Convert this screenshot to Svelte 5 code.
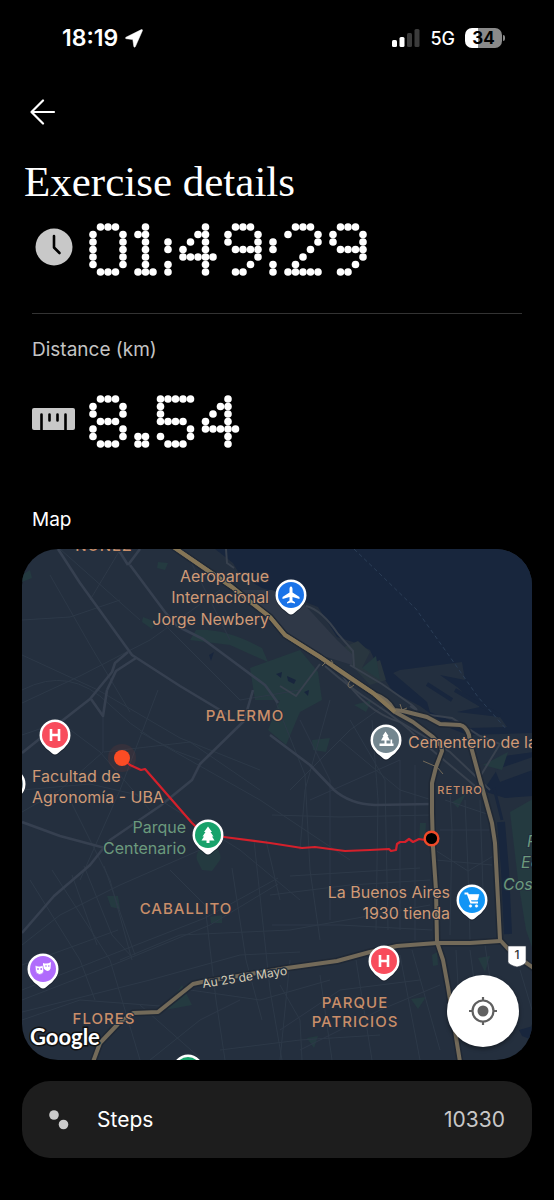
<script>
  // Each glyph is a list of seven rows; "#" marks a lit dot.
  const glyphs = {
    '0': [' ### ', '#   #', '#   #', '#   #', '#   #', '#   #', ' ### '],
    '1': [' # ', '## ', ' # ', ' # ', ' # ', ' # ', '###'],
    '2': [' ### ', '#   #', '    #', '   # ', '  #  ', ' #   ', '#####'],
    '4': ['   # ', '  ## ', ' # # ', '#  # ', '#####', '   # ', '   # '],
    '5': ['#####', '#    ', '#    ', '#### ', '    #', '#   #', ' ### '],
    '8': [' ### ', '#   #', '#   #', ' ### ', '#   #', '#   #', ' ### '],
    '9': [' ### ', '#   #', '#   #', ' ####', '    #', '   # ', ' ##  '],
    ':': [' ', ' ', '#', '#', ' ', '#', '#'],
    '.': ['  ', '  ', '  ', '  ', '  ', '##', '##']
  };

  function matrix(value) {
    const dots = [];
    let col = 0;
    for (const ch of value) {
      const rows = glyphs[ch];
      rows.forEach((row, y) => {
        [...row].forEach((cell, x) => {
          if (cell === '#') dots.push({ x: (col + x) * 15 + 8, y: y * 15 + 8 });
        });
      });
      col += rows[0].length + 1;
    }
    return { dots, width: (col - 1) * 15 + 1 };
  }

  const duration = '01:49:29';
  const distance = '8.54';
  const steps = 10330;

  const minorRoads = [
    'M22 655 L98 690 L180 738 L260 770',
    'M22 703 L80 676 L150 640 L220 590',
    'M22 620 L70 617 L120 600',
    'M50 575 L90 645 L130 712',
    'M22 690 Q70 665 110 705 T200 760',
    'M103 716 L103 752 L60 790 L22 812',
    'M120 550 L90 600 M160 620 L240 700 L300 690',
    'M158 690 L120 790 L80 880',
    'M140 732 L260 800 L350 860',
    'M104 752 L190 742 L260 790',
    'M22 735 L60 722 L100 752 L150 810',
    'M22 790 L90 784 L160 800 L240 850 L300 900',
    'M70 800 L110 880 L132 960',
    'M22 945 L60 915 L120 885 L200 850',
    'M52 870 L110 960 L140 1060',
    'M30 880 L80 960 L95 1000',
    'M84 866 L112 935 L132 957',
    'M104 866 L135 955',
    'M72 875 L97 945',
    'M22 965 L118 930',
    'M22 990 L118 952 L205 918 L278 878',
    'M22 1000 L120 962 L210 925 L278 884',
    'M22 1012 L150 980 L240 955 L300 952',
    'M22 1020 L80 1000 L160 1006',
    'M120 960 L180 935 L290 930 L430 905',
    'M170 870 L205 905 L216 1000 L225 1060',
    'M232 868 L246 960 L262 1020',
    'M254 840 L270 990 L282 1060',
    'M266 840 L280 900',
    'M240 1000 L200 1020 L150 1060',
    'M140 1005 L200 1058 M190 990 L260 1000 L330 980',
    'M220 1050 L300 1040 L380 1035',
    'M272 815 L340 817 L432 815',
    'M270 895 L350 885 L430 880',
    'M290 876 L420 868',
    'M272 925 L340 925 L432 930',
    'M275 700 L305 775 L310 870 L320 940',
    'M300 720 L330 780 L330 920',
    'M330 700 L305 790 L300 850',
    'M350 720 L385 780 L388 930',
    'M372 720 L378 800 L376 930',
    'M400 760 L400 930',
    'M415 765 L415 940',
    'M290 790 L350 730 L385 705',
    'M310 800 L400 760',
    'M340 740 L400 790 L432 800',
    'M445 800 L490 815 M440 830 L490 830 M436 860 L492 865',
    'M450 790 L452 830 L450 935 M465 800 L468 870 M480 800 L483 890',
    'M435 850 L468 871 L495 855 M468 871 L470 940',
    'M280 985 L300 1020 L302 1060 M320 975 L332 1060 M356 960 L372 1060',
    'M290 960 L280 1060 M400 955 L420 1060 M412 950 L440 1050',
    'M280 1030 L340 990 L420 980 M300 1050 L380 1010 L440 985',
    'M470 950 L474 980 M456 950 L458 985 M485 945 L490 978 M520 970 L532 1010',
    'M190 560 L230 640 M60 549 L140 620'
  ];

  const arterials = [
    'M58 549 L80 583 L132 655 L180 686 L230 716',
    'M128 565 L140 549 M118 549 L128 565',
    'M130 565 L165 612 L177 626 L203 639 L265 685 L278 703',
    'M136 658 L116 671 L107 690',
    'M128 652 L115 663 L112 672 L90 699 L58 724 L22 753',
    'M91 699 L103 716 L107 690',
    'M253 690 L244 721 L200 764 L192 780 L160 806 L110 840 L90 865 L54 896 L22 933',
    'M22 822 L60 836 L105 848',
    'M270 735 L310 765 L334 790 Q350 804 375 805 L432 804'
  ];

  const parks = [
    'M250 668 L300 650 L318 672 L322 700 L300 712 L286 745 L268 730 L280 700 L255 700 Z',
    'M158 562 L168 563 L165 570 L157 568 Z',
    'M196 630 Q225 628 262 648 L268 662 L230 645 L190 640 Z',
    'M143 617 L156 622 L152 629 L142 622 Z',
    'M22 575 L30 570 L32 578 L22 582 Z',
    'M312 740 L330 738 L326 752 L313 750 Z',
    'M362 668 L376 656 L380 680 Z',
    'M107 896 L118 896 L120 909 L111 907 Z',
    'M210 917 L222 915 L222 923 L211 923 Z',
    'M165 1010 L182 985 L192 1005 Z',
    'M197 860 A12 11 0 1 1 220 860 L212 871 L202 870 Z',
    'M452 802 L466 794 L458 808 Z',
    'M411 999 L426 997 L418 1009 Z',
    'M478 958 L490 956 L485 972 Z',
    'M420 823 L426 823 L425 840 L419 840 Z',
    'M510 812 L533 799 L533 950 L526 930 L518 880 Z',
    'M483 765 L508 752 L502 770 Z',
    'M307 1038 L318 1036 L314 1048 Z',
    'M432 955 L437 952 L438 965 L433 966 Z',
    'M354 705 L372 700 L366 712 Z'
  ];

  const highways = [
    'M172 546 L207 570 L232 587 L253 604 L270 617 L285 635 L320 657 L350 678 L373 693 L395 712 L413 722 L433 737 L441 746 L442 751 L436 767 L432 783 L432 813 L433 847 L436 890 L437 942 L443 960 L448 987 L460 1062',
    'M374 694 Q388 699 394 710 L403 711 L427 717 L440 724 L460 725 Q466 726 469 735 L470 743 L480 780 L492 823 L495 843 L498 900 L500 940 L512 953 L535 969',
    'M500 941 L470 943 L437 943 L397 946 L370 952 L337 961 L287 968 L202 982 L193 984 L158 1012 L133 1013 L118 1024 L100 1043 L93 1062'
  ];

  const pinShape =
    'M0 19.500 C-2 19.500 -3.500 18 -5 16.500 C-7 14.500 -9 13.600 -10.500 11.400 A15.500 15.500 0 1 1 10.500 11.400 C9 13.600 7 14.500 5 16.500 C3.500 18 2 19.500 0 19.500 Z';
</script>

{#snippet pin(x, y, color)}
  <g transform="translate({x} {y})">
    <path d={pinShape} fill="#0c121b" opacity=".5" transform="translate(0 1)" />
    <path d={pinShape} fill="#fff" />
    <circle r="13" fill={color} />
  </g>
{/snippet}

{#snippet hospital(x, y)}
  {@render pin(x, y, '#f84c5c')}
  <path transform="translate({x} {y})" d="M-4 -6 V6 M4 -6 V6 M-4 0 H4" stroke="#fff" stroke-width="2.600" fill="none" />
{/snippet}

{#snippet readout(value)}
  {@const m = matrix(value)}
  <svg class="readout" style:width="{m.width / 2}px" viewBox="0 0 {m.width} 106" role="img" aria-label={value}>
    {#each m.dots as d}
      <circle cx={d.x} cy={d.y} r="7.600" fill="#fff" />
    {/each}
  </svg>
{/snippet}

<div class="screen">
  <header class="status">
    <div class="clock">
      <span>18:19</span>
      <svg width="18" height="19" viewBox="0 0 18 19" aria-hidden="true">
        <path d="M16.400 .6 L1 8.200 C.2 8.700 .4 9.600 1.200 9.700 L7.800 10.600 L8.800 17.400 C9 18.400 10 18.500 10.400 17.600 L17.400 1.700 C17.700 .9 17.100 .3 16.400 .6 Z" fill="#fff" stroke="#fff" stroke-width=".5" />
      </svg>
    </div>
    <div class="signal">
      <svg width="28" height="18" viewBox="0 0 28 18" aria-hidden="true">
        <rect x="0" y="11" width="5" height="7" rx="1.500" fill="#fff" />
        <rect x="7.500" y="8" width="5" height="10" rx="1.500" fill="#fff" />
        <rect x="15" y="4" width="5" height="14" rx="1.500" fill="#3b3b3b" />
        <rect x="22.500" y="0" width="5" height="18" rx="1.500" fill="#3b3b3b" />
      </svg>
      <span class="network">5G</span>
      <div class="battery"><span>34</span></div>
    </div>
  </header>

  <button class="back" aria-label="Back">
    <svg width="26" height="26" viewBox="0 0 26 26" fill="none" stroke="#fff" stroke-width="2.200" stroke-linecap="round" stroke-linejoin="round">
      <path d="M13 1.500 L1.500 13 L13 24.500 M1.500 13 H24" />
    </svg>
  </button>

  <h1>Exercise details</h1>

  <section class="metric">
    <div class="icon">
      <svg width="38" height="38" viewBox="0 0 38 38" aria-hidden="true">
        <circle cx="19" cy="19" r="18.500" fill="#c8c8c8" />
        <path d="M19 8 V19.500 L24.500 25" fill="none" stroke="#000" stroke-width="2.600" stroke-linecap="round" stroke-linejoin="round" />
      </svg>
    </div>
    {@render readout(duration)}
  </section>

  <hr />

  <h2 class="muted">Distance (km)</h2>
  <section class="metric distance">
    <div class="icon">
      <svg width="43" height="22" viewBox="0 0 43 22" aria-hidden="true">
        <rect x="0" y="0" width="43" height="22" rx="2" fill="#c8c8c8" />
        <path d="M9.500 6.500 V22 M17.500 6.500 V12.500 M25.500 6.500 V12.500 M33.500 6.500 V22" fill="none" stroke="#000" stroke-width="2.600" stroke-linecap="round" />
      </svg>
    </div>
    {@render readout(distance)}
  </section>

  <h2>Map</h2>
  <div class="map">
    <svg class="canvas" viewBox="22 549 510 511">
      <rect x="22" y="549" width="510" height="511" fill="#242f3e" />

      <path fill="#18263d" d="M215 549 L233 563 L240 575 L262 588 L300 600 L318 607 L337 637 L353 642 L370 650 L380 672 L393 692 L420 706 L450 728 L480 740 L505 758 L483 791 L505 798 L533 796 L533 549 Z" />
      <g fill="#232f3f">
        <path d="M393 673 L400 670 L462 662 L465 680 L440 675 L457 687 L480 707 L457 712 L500 717 L507 727 L470 728 L430 712 L427 702 Z" />
        <path d="M466 735 L533 733 L533 752 L505 756 L478 765 Z" />
        <path d="M495 770 L533 757 L533 770 L500 782 Z" />
        <path d="M337 650 L358 641 L370 652 L362 668 L380 660 L386 680 L370 685 Z" fill="#29363f" />
      </g>
      <path fill="#2f3847" d="M240 590 L272 590 L303 603 L337 640 L353 655 L352 665 L320 655 L285 632 L262 606 Z" />
      <g fill="none" stroke="#18263d">
        <path d="M427 684 L452 700 M455 690 L500 716" stroke-width="4" />
        <path d="M501 822 L505 870 L508 934" stroke-width="8" />
        <path d="M494 788 L502 820" stroke-width="3" />
      </g>
      <path fill="#18263d" d="M519 1030 L533 1026 V1040 L522 1036 Z" />
      {#each parks as d}
        <path {d} fill="#243a40" />
      {/each}
      <path fill="#18263d" d="M276 674 L282 672 L281 678 Z M287 676 L296 680 L294 684 L288 681 Z M304 692 L309 690 L308 696 Z M209 655 L214 652 L211 661 Z" />
      <path d="M354 549 L380 574 L416 609 L450 657 L478 697 L507 730" fill="none" stroke="#2b3e57" stroke-dasharray="4 3" />

      <g fill="none" stroke="#2d3948" stroke-linejoin="round">
        {#each minorRoads as d}<path {d} />{/each}
      </g>
      <g fill="none" stroke="#364050" stroke-width="2.600" stroke-linejoin="round">
        {#each arterials as d}<path {d} />{/each}
      </g>
      <g fill="none" stroke="#38414e" stroke-width="2">
        <path d="M306 606 Q322 610 338 634 L353 651 L354 667 M350 665 L382 684 L412 705 Q422 714 410 706" />
        <path d="M226 549 L227 563 L234 568" />
        <path d="M320 664 L296 696 L280 686 M325 666 Q350 688 375 704 T420 740 L475 786" />
        <path d="M340 672 Q365 712 400 722 L450 752 L490 790 M408 712 L452 718 L480 736 L500 744 L478 780" />
      </g>

      <g fill="none" stroke-linejoin="round">
        {#each highways as d}<path {d} stroke="#1f2835" stroke-width="7" />{/each}
        {#each highways as d}<path {d} stroke="#736a59" stroke-width="4" />{/each}
        <path d="M172 546 L232 587 L270 617 L285 635 L320 657 L373 693 L395 712" stroke="#857556" stroke-width="4" />
        <path d="M423 761 L437 767 L443 774 M350 681 Q346 686 350 688 L354 685 M400 704 L402 710 L407 708 M322 666 L326 662 M331 660 L333 663" stroke="#736a59" />
      </g>

      <g class="place" text-anchor="end">
        <text x="269" y="582">Aeroparque</text>
        <text x="269" y="603">Internacional</text>
        <text x="269" y="625">Jorge Newbery</text>
        <text x="450" y="898">La Buenos Aires</text>
        <text x="450" y="919">1930 tienda</text>
      </g>
      <g class="place">
        <text x="32" y="782">Facultad de</text>
        <text x="32" y="803">Agronomía - UBA</text>
        <text x="408" y="748">Cementerio de la</text>
      </g>
      <g class="place park" text-anchor="end">
        <text x="186" y="833">Parque</text>
        <text x="186" y="854">Centenario</text>
      </g>
      <g class="place park slanted">
        <text x="527" y="847">Reserva</text>
        <text x="521" y="868">Ecológica</text>
        <text x="503" y="890">Costanera</text>
      </g>
      <g class="district" text-anchor="middle">
        <text x="104" y="551">NUÑEZ</text>
        <text x="245" y="721">PALERMO</text>
        <text x="186" y="914">CABALLITO</text>
        <text x="104" y="1024">FLORES</text>
        <text x="355" y="1008">PARQUE</text>
        <text x="355" y="1027">PATRICIOS</text>
        <text class="small" x="460" y="794">RETIRO</text>
      </g>
      <text class="road" x="203" y="988" transform="rotate(-9 203 988)">Au 25 de Mayo</text>

      <path d="M122 758 L130 765 L141 770 L145 769 L192 823 L206 836 L224 837 L270 843 L302 848 L315 847 L345 851 L370 850 L389 849 L391 851 L396 850 L397 844 L400 842 L405 842 L409 839 L413 842 L419 839 L425 840 L431 839" fill="none" stroke="#d4202b" stroke-width="2.200" stroke-linejoin="round" />
      <circle cx="122" cy="758" r="14" fill="#fc4c24" opacity=".08" />
      <circle cx="122" cy="758" r="8" fill="#fc4c24" />
      <circle cx="431.500" cy="838.500" r="6.800" fill="#000" stroke="#f04a28" stroke-width="2.400" />

      {@render pin(291, 595, '#1a73e8')}
      <path d="M291 586.500 C292.200 586.500 292.500 588 292.500 589 V592.500 L299.500 597 V599 L292.500 597 V600.500 L295 602.200 V603.500 L291 602.400 L287 603.500 V602.200 L289.500 600.500 V597 L282.500 599 V597 L289.500 592.500 V589 C289.500 588 289.800 586.500 291 586.500 Z" fill="#fff" />
      {@render hospital(55, 735)}
      {@render hospital(384, 961)}
      {@render pin(386, 740, '#73868f')}
      <path d="M385.500 731.500 L388.500 736 H387.500 L390 740.500 H386.500 V743.500 H390.500 V739.500 H392.200 V743.500 H393.500 V746 H379.500 V743.500 H384.500 V740.500 H381 L383.500 736 H382.500 Z" fill="#fff" />
      {@render pin(208, 835, '#18a26b')}
      <path d="M208 826.500 L212 832 H210.500 L213.500 836.500 H212 L214.500 840.500 H209.500 V843 H206.500 V840.500 H201.500 L204 836.500 H202.500 L205.500 832 H204 Z" fill="#fff" />
      {@render pin(472, 900, '#1195f5')}
      <g fill="#fff" stroke="#fff">
        <path d="M464.500 893.500 H467.500 L471 902.500 H478" fill="none" stroke-width="1.800" />
        <path d="M468.500 894.500 H479 L477.500 900 H470.500 Z" stroke-width=".6" />
        <circle cx="470.500" cy="906" r="1.300" stroke-width=".5" />
        <circle cx="476.500" cy="906" r="1.300" stroke-width=".5" />
      </g>
      {@render pin(43, 969, '#b06bfc')}
      <g transform="translate(43 969)">
        <path d="M0 -6 Q4 -4.500 8 -7 L7.500 -.5 Q6.500 3 3 1.500 L0 -1 Z" fill="#fff" />
        <path d="M-8 -3.500 Q-4 -2 0 -3.500 L.8 2 Q0 5.500 -3.500 5.500 Q-7.500 5 -7.500 1 Z" fill="#fff" stroke="#b06bfc" stroke-width=".7" />
        <g fill="#b06bfc"><circle cx="-5" cy="0" r=".9" /><circle cx="-1.800" cy="0" r=".9" /><circle cx="3" cy="-3" r=".8" /><circle cx="5.800" cy="-3" r=".8" /></g>
      </g>
      {@render pin(188, 1070, '#18a26b')}
      {@render pin(10, 784, '#73868f')}

      <path d="M508 946 H526 V962 Q525 965 517 967 Q509 965 508 962 Z" fill="#fff" stroke="#39424e" stroke-width=".6" />
      <text class="shield" x="517" y="959" text-anchor="middle">1</text>
      <text class="brand" x="30" y="1045">Google</text>
    </svg>
    <button class="locate" aria-label="My location">
      <svg width="30" height="30" viewBox="0 0 30 30" fill="none" stroke="#606060" stroke-width="2.200">
        <circle cx="15" cy="15" r="10.500" />
        <circle cx="15" cy="15" r="5.500" fill="#606060" stroke="none" />
        <path d="M15 1 V5 M15 25 V29 M1 15 H5 M25 15 H29" />
      </svg>
    </button>
  </div>

  <section class="steps">
    <svg width="20" height="20" viewBox="0 0 20 20" aria-hidden="true">
      <circle cx="5" cy="5" r="4.800" fill="#cbcbcb" />
      <circle cx="14.500" cy="14.500" r="4.800" fill="#cbcbcb" />
    </svg>
    <span class="name">Steps</span>
    <span class="value">{steps}</span>
  </section>
</div>

<style>
  :global(body) {
    background: #000;
  }

  .screen {
    min-height: 100vh;
    box-sizing: border-box;
    padding: 24px 22px 40px;
    background: #000;
    color: #fff;
    font-family: Inter, 'Liberation Sans', sans-serif;
    display: flex;
    flex-direction: column;
  }

  button {
    padding: 0;
    border: 0;
    background: none;
    cursor: pointer;
    display: grid;
    place-items: center;
  }

  svg {
    display: block;
    flex: none;
  }

  .status {
    height: 28px;
    padding: 0 27px 0 40px;
    display: flex;
    align-items: center;
    justify-content: space-between;
  }

  .clock,
  .signal {
    display: flex;
    align-items: center;
  }

  .clock {
    gap: 7px;
    font-size: 23px;
    font-weight: 600;
  }

  .signal {
    gap: 10px;
  }

  .network {
    font-size: 18px;
    font-weight: 500;
  }

  .battery {
    position: relative;
    width: 37px;
    height: 20px;
    margin-right: 3px;
    border-radius: 7px;
    background: linear-gradient(90deg, #fff 35%, #8a8a8a 35%);
    color: #000;
    font-size: 17px;
    font-weight: 700;
    line-height: 20px;
    text-align: center;
  }

  .battery::after {
    content: '';
    position: absolute;
    left: 38px;
    top: 7px;
    width: 2px;
    height: 6px;
    border-radius: 0 2px 2px 0;
    background: #8a8a8a;
  }

  .back {
    width: 42px;
    height: 42px;
    margin-top: 39px;
  }

  h1 {
    margin: 24px 0 0 2px;
    font: 400 43px/50px 'Liberation Serif', serif;
  }

  h2 {
    margin: 0 10px;
    font-size: 19px;
    line-height: 24px;
    font-weight: 400;
  }

  .muted {
    color: #c4c4c4;
  }

  .metric {
    display: flex;
    align-items: center;
    margin-top: 16px;
    padding-left: 10px;
  }

  .icon {
    width: 43px;
    display: grid;
    place-items: center;
    margin: 0 14px 6px 0;
  }

  .readout {
    height: 53px;
    overflow: visible;
  }

  hr {
    width: auto;
    height: 1px;
    margin: 37px 10px 24px;
    border: 0;
    background: #333;
  }

  .distance {
    margin: 33px 0 60px;
  }

  .map {
    position: relative;
    margin-top: 17px;
    border-radius: 36px;
    overflow: hidden;
  }

  .canvas {
    width: 100%;
    height: auto;
  }

  .place {
    font-size: 16px;
    fill: #d09a76;
    stroke: #242f3e;
    stroke-width: 2px;
    paint-order: stroke;
  }

  .park {
    fill: #6b9a7d;
  }

  .slanted {
    font-style: italic;
  }

  .district {
    font-size: 15px;
    font-weight: 500;
    letter-spacing: 1px;
    fill: #c98e69;
    stroke: #242f3e;
    stroke-width: 2px;
    paint-order: stroke;
  }

  .small {
    font-size: 11px;
  }

  .road {
    font-size: 12px;
    fill: #d6cdb6;
    stroke: #242f3e;
    stroke-width: 3px;
    paint-order: stroke;
  }

  .shield {
    font-size: 12px;
    font-weight: 500;
    fill: #333;
  }

  .brand {
    font: 700 22px Lato, sans-serif;
    fill: #fff;
    stroke: #111;
    stroke-width: 3px;
    paint-order: stroke;
  }

  .locate {
    position: absolute;
    right: 13px;
    bottom: 13px;
    width: 72px;
    height: 72px;
    border-radius: 50%;
    background: #fff;
    box-shadow: 0 2px 4px rgb(0 0 0 / 40%);
  }

  .steps {
    margin-top: 21px;
    height: 77px;
    padding: 0 27px;
    border-radius: 28px;
    background: #1d1d1d;
    display: flex;
    align-items: center;
    gap: 28px;
    font-size: 21px;
  }

  .value {
    margin-left: auto;
    color: #c8c8c8;
  }
</style>
